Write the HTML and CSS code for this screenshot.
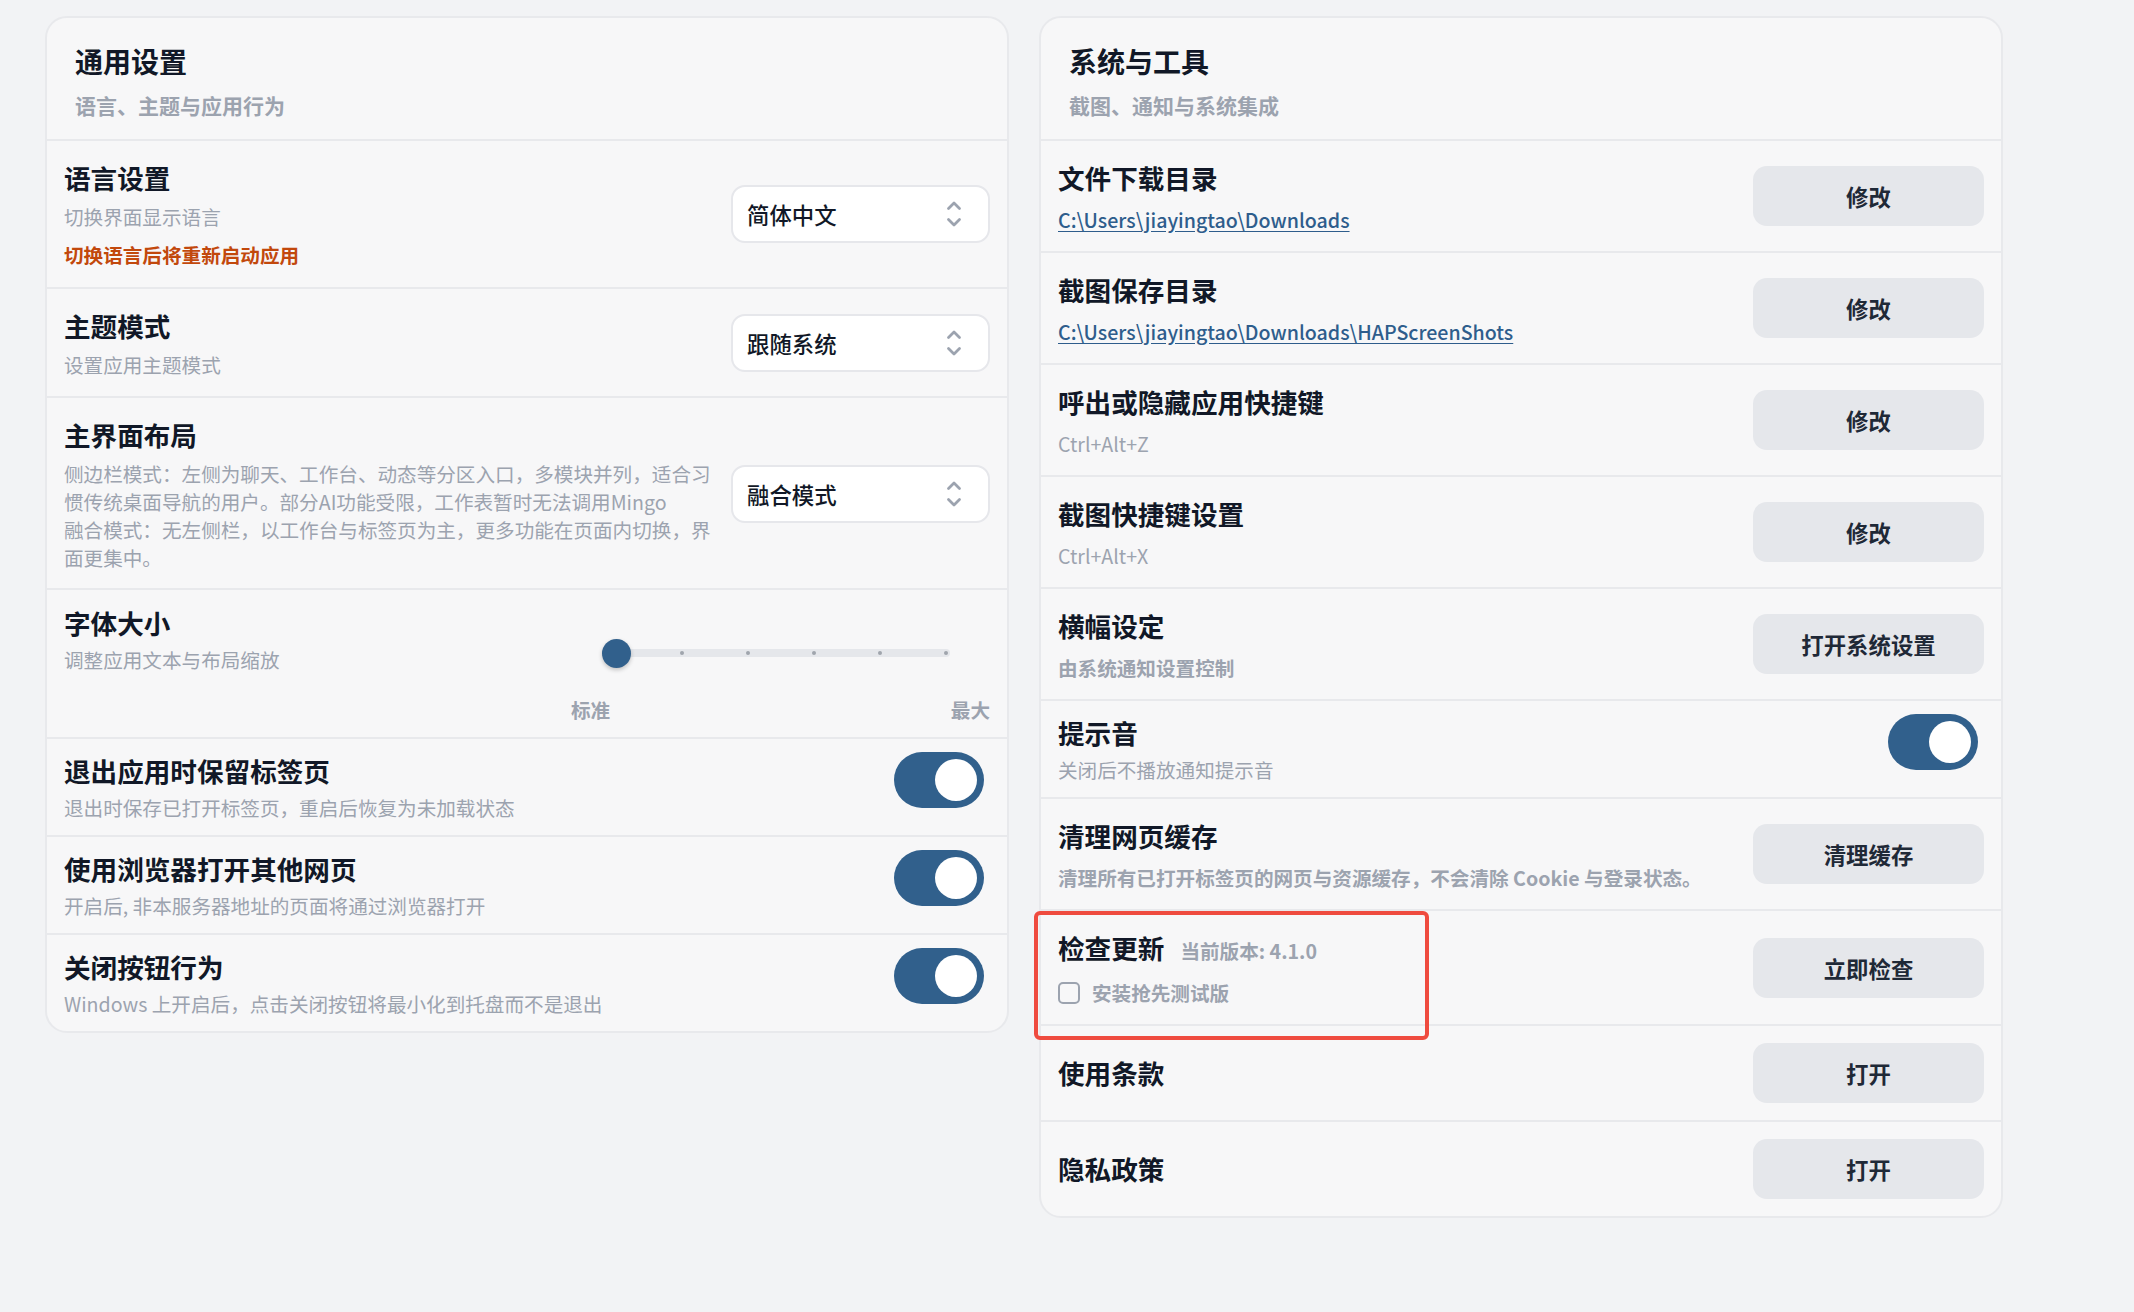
FILE: index.html
```html
<!DOCTYPE html>
<html lang="zh-CN">
  <head>
    <meta charset="utf-8">
    <link rel="stylesheet" href="styles.css">
  </head>
  <body>
    <div class="settings">
      <!-- left column -->
      <section class="card">
        <div class="card-head">
          <h2 class="card-title">通用设置</h2>
          <p class="card-sub">语言、主题与应用行为</p>
        </div>

        <div class="row">
          <div class="row-text">
            <div class="row-title">语言设置</div>
            <div class="row-desc">切换界面显示语言</div>
            <div class="row-warn">切换语言后将重新启动应用</div>
          </div>
          <div class="select">
            <span>简体中文</span>
            <svg class="chevrons" width="16" height="30" viewBox="0 0 16 30"><path d="M2.5 9.5L8 4L13.5 9.5M2.5 20.5L8 26L13.5 20.5"/></svg>
          </div>
        </div>

        <div class="row row-theme">
          <div class="row-text">
            <div class="row-title">主题模式</div>
            <div class="row-desc">设置应用主题模式</div>
          </div>
          <div class="select">
            <span>跟随系统</span>
            <svg class="chevrons" width="16" height="30" viewBox="0 0 16 30"><path d="M2.5 9.5L8 4L13.5 9.5M2.5 20.5L8 26L13.5 20.5"/></svg>
          </div>
        </div>

        <div class="row row-layout">
          <div class="row-text">
            <div class="row-title">主界面布局</div>
            <div class="row-desc">
              <p>侧边栏模式：左侧为聊天、工作台、动态等分区入口，多模块并列，适合习惯传统桌面导航的用户。部分AI功能受限，工作表暂时无法调用Mingo</p>
              <p>融合模式：无左侧栏，以工作台与标签页为主，更多功能在页面内切换，界面更集中。</p>
            </div>
          </div>
          <div class="select">
            <span>融合模式</span>
            <svg class="chevrons" width="16" height="30" viewBox="0 0 16 30"><path d="M2.5 9.5L8 4L13.5 9.5M2.5 20.5L8 26L13.5 20.5"/></svg>
          </div>
        </div>

        <div class="row row-font">
          <div class="row-text">
            <div class="row-title">字体大小</div>
            <div class="row-desc">调整应用文本与布局缩放</div>
          </div>
          <div class="font-scale">
            <div class="scale-track">
              <span class="dot"></span><span class="dot"></span><span class="dot"></span>
              <span class="dot"></span><span class="dot"></span><span class="dot"></span>
              <span class="scale-thumb"></span>
            </div>
            <div class="scale-labels">
              <span>标准</span>
              <span>最大</span>
            </div>
          </div>
        </div>

        <div class="row row-switch">
          <div class="row-text">
            <div class="row-title">退出应用时保留标签页</div>
            <div class="row-desc">退出时保存已打开标签页，重启后恢复为未加载状态</div>
          </div>
          <span class="switch"><span class="knob"></span></span>
        </div>

        <div class="row row-switch">
          <div class="row-text">
            <div class="row-title">使用浏览器打开其他网页</div>
            <div class="row-desc">开启后, 非本服务器地址的页面将通过浏览器打开</div>
          </div>
          <span class="switch"><span class="knob"></span></span>
        </div>

        <div class="row row-switch">
          <div class="row-text">
            <div class="row-title">关闭按钮行为</div>
            <div class="row-desc">Windows 上开启后，点击关闭按钮将最小化到托盘而不是退出</div>
          </div>
          <span class="switch"><span class="knob"></span></span>
        </div>
      </section>

      <!-- right column -->
      <section class="card">
        <div class="card-head">
          <h2 class="card-title">系统与工具</h2>
          <p class="card-sub">截图、通知与系统集成</p>
        </div>

        <div class="row row-btn">
          <div class="row-text">
            <div class="row-title">文件下载目录</div>
            <div class="row-desc"><a class="path-link">C:\Users\jiayingtao\Downloads</a></div>
          </div>
          <button class="btn">修改</button>
        </div>

        <div class="row row-btn">
          <div class="row-text">
            <div class="row-title">截图保存目录</div>
            <div class="row-desc"><a class="path-link">C:\Users\jiayingtao\Downloads\HAPScreenShots</a></div>
          </div>
          <button class="btn">修改</button>
        </div>

        <div class="row row-btn">
          <div class="row-text">
            <div class="row-title">呼出或隐藏应用快捷键</div>
            <div class="row-desc">Ctrl+Alt+Z</div>
          </div>
          <button class="btn">修改</button>
        </div>

        <div class="row row-btn">
          <div class="row-text">
            <div class="row-title">截图快捷键设置</div>
            <div class="row-desc">Ctrl+Alt+X</div>
          </div>
          <button class="btn">修改</button>
        </div>

        <div class="row row-btn">
          <div class="row-text">
            <div class="row-title">横幅设定</div>
            <div class="row-desc strong">由系统通知设置控制</div>
          </div>
          <button class="btn">打开系统设置</button>
        </div>

        <div class="row row-switch">
          <div class="row-text">
            <div class="row-title">提示音</div>
            <div class="row-desc">关闭后不播放通知提示音</div>
          </div>
          <span class="switch"><span class="knob"></span></span>
        </div>

        <div class="row row-btn">
          <div class="row-text">
            <div class="row-title">清理网页缓存</div>
            <div class="row-desc strong">清理所有已打开标签页的网页与资源缓存，不会清除 Cookie 与登录状态。</div>
          </div>
          <button class="btn">清理缓存</button>
        </div>

        <div class="row row-btn row-update">
          <div class="row-text">
            <div class="row-title">检查更新<span class="version">当前版本: 4.1.0</span></div>
            <label class="row-desc check">
              <span class="checkbox"></span>
              <span>安装抢先测试版</span>
            </label>
          </div>
          <button class="btn">立即检查</button>
          <span class="mark"></span>
        </div>

        <div class="row row-plain">
          <div class="row-text">
            <div class="row-title">使用条款</div>
          </div>
          <button class="btn">打开</button>
        </div>

        <div class="row row-plain">
          <div class="row-text">
            <div class="row-title">隐私政策</div>
          </div>
          <button class="btn">打开</button>
        </div>
      </section>
    </div>
  </body>
</html>
```

FILE: styles.css
```css
* {
  box-sizing: border-box;
}

body {
  margin: 0;
  background: #f2f3f5;
  font-family: "Noto Sans CJK SC", "Noto Sans", sans-serif;
  color: #111827;
}

.settings {
  display: grid;
  grid-template-columns: 964px 964px;
  gap: 30px;
  align-items: start;
  padding: 16px 0 0 45px;
}

.card {
  background: #f7f7f8;
  border: 2px solid #e8e9ec;
  border-radius: 22px;
}

.card-head {
  padding: 23px 28px 19px;
}

.card-title {
  margin: 0;
  font-size: 28px;
  line-height: 40px;
  font-weight: 700;
}

.card-sub {
  margin: 9px 0 0;
  font-size: 21px;
  line-height: 30px;
  font-weight: 600;
  color: #9ca3af;
}

/* one setting per row */
.row {
  position: relative;
  display: flex;
  align-items: center;
  gap: 16px;
  padding: 18px 17px;
  border-top: 2px solid #e8e9ec;
}

.row-text {
  flex: 1;
  min-width: 0;
}

.row-title {
  font-size: 26.6px;
  line-height: 38px;
  font-weight: 700;
}

.row-desc {
  margin-top: 6px;
  font-size: 19.6px;
  line-height: 28px;
  color: #9ca3af;
}

.row-desc p {
  margin: 0;
}

.row-desc.strong {
  font-weight: 600;
}

.row-warn {
  margin-top: 10px;
  font-size: 19.6px;
  line-height: 28px;
  font-weight: 600;
  color: #c2480c;
}

.row-theme {
  padding: 17.5px 17px;
}

.row-layout {
  padding-bottom: 16px;
}

.row-btn {
  padding: 17.5px 17px;
}

.row-btn .row-desc {
  margin-top: 9px;
}

.row-update {
  padding-bottom: 17px;
}

.row-plain {
  padding: 17px 17px;
}

.row-switch {
  align-items: flex-start;
  padding: 13px 17px;
}

.row-switch .row-desc {
  margin-top: 4px;
}

/* select box */
.select {
  flex: none;
  width: 259px;
  height: 58px;
  display: flex;
  align-items: center;
  justify-content: space-between;
  padding: 0 26px 0 14px;
  background: #fff;
  border: 2px solid #e6e7eb;
  border-radius: 14px;
  font-size: 22.4px;
  font-weight: 500;
  color: #111827;
}

.chevrons path {
  fill: none;
  stroke: #9ca3af;
  stroke-width: 2.8;
  stroke-linecap: round;
  stroke-linejoin: round;
}

/* font size slider */
.row-font {
  align-items: flex-start;
  padding-top: 14px;
  padding-bottom: 13px;
}

.row-font .row-desc {
  margin-top: 4px;
}

.font-scale {
  flex: none;
  width: 419px;
}

.scale-track {
  position: relative;
  width: 348px;
  height: 8px;
  margin: 45px 0 0 31px;
  padding: 0 2px 0 12px;
  display: flex;
  align-items: center;
  justify-content: space-between;
  background: #e5e7eb;
  border-radius: 4px;
}

.dot {
  width: 4px;
  height: 4px;
  border-radius: 50%;
  background: #a0a5ad;
}

.scale-thumb {
  position: absolute;
  left: 0;
  top: 50%;
  width: 29px;
  height: 29px;
  margin-top: -14.5px;
  border-radius: 50%;
  background: #31608c;
  box-shadow: 0 2px 4px rgba(0, 0, 0, 0.22);
}

.scale-labels {
  display: flex;
  justify-content: space-between;
  margin-top: 39px;
  font-size: 19.6px;
  line-height: 28px;
  font-weight: 600;
  color: #9ca3af;
}

/* toggle switch */
.switch {
  flex: none;
  width: 90px;
  height: 56px;
  margin-right: 6px;
  padding: 0 7px;
  display: flex;
  align-items: center;
  justify-content: flex-end;
  background: #31608c;
  border-radius: 28px;
}

.knob {
  width: 42px;
  height: 42px;
  border-radius: 50%;
  background: #fff;
}

/* gray action button */
.btn {
  flex: none;
  width: 231px;
  height: 60px;
  border: none;
  border-radius: 14px;
  background: #e5e7eb;
  font-family: inherit;
  font-size: 22.4px;
  font-weight: 600;
  color: #1f2937;
}

.path-link {
  color: #2e5d8c;
  font-weight: 500;
  text-decoration: underline;
  text-underline-offset: 3px;
}

.version {
  margin-left: 16px;
  font-size: 19.6px;
  font-weight: 600;
  color: #9ca3af;
}

.check {
  display: flex;
  align-items: center;
  gap: 12px;
  font-weight: 600;
}

.checkbox {
  width: 22px;
  height: 22px;
  border: 2px solid #9ca3af;
  border-radius: 5px;
}

/* red outline around the update row */
.mark {
  position: absolute;
  left: -7px;
  top: 0;
  width: 395px;
  height: 129px;
  border: 4px solid #ef4b3f;
  border-radius: 6px;
  z-index: 2;
  pointer-events: none;
}
```
